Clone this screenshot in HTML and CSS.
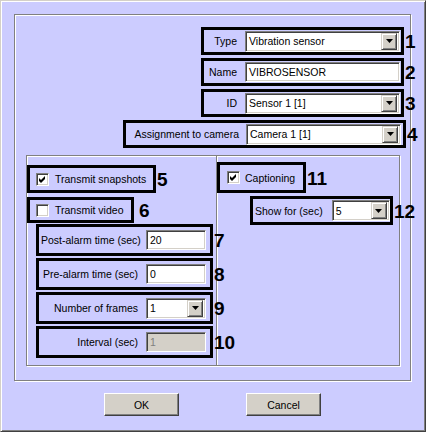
FILE: index.html
```html
<!DOCTYPE html>
<html lang="en">
<head>
    <meta charset="UTF-8">
    <title>Sensor settings</title>
    <link rel="stylesheet" href="styles.css">
</head>
<body>
    <div class="dialog">
        <div class="frame main">
            <div class="field top">
                <span class="label">Type</span>
                <div class="combo w155"><span class="value">Vibration sensor</span><span class="drop"><svg width="7" height="4"><polygon points="0,0 7,0 3.5,4" fill="#000"/></svg></span></div>
                <span class="num">1</span>
            </div>
            <div class="field top">
                <span class="label">Name</span>
                <div class="edit w155">VIBROSENSOR</div>
                <span class="num">2</span>
            </div>
            <div class="field top">
                <span class="label">ID</span>
                <div class="combo w155"><span class="value">Sensor 1 [1]</span><span class="drop"><svg width="7" height="4"><polygon points="0,0 7,0 3.5,4" fill="#000"/></svg></span></div>
                <span class="num">3</span>
            </div>
            <div class="field top wide">
                <span class="label">Assignment to camera</span>
                <div class="combo w155"><span class="value">Camera 1 [1]</span><span class="drop"><svg width="7" height="4"><polygon points="0,0 7,0 3.5,4" fill="#000"/></svg></span></div>
                <span class="num">4</span>
            </div>

            <div class="frame options">
                <div class="col col-left">
                    <div class="field check snapshots">
                        <span class="box"><svg width="7" height="7"><polygon points="0,2 2,4 6,0 6,3 2,7 0,5" fill="#000"/></svg></span>
                        <span>Transmit snapshots</span>
                        <span class="num">5</span>
                    </div>
                    <div class="field check video">
                        <span class="box"></span>
                        <span>Transmit video</span>
                        <span class="num far">6</span>
                    </div>
                    <div class="field timed">
                        <span class="label">Post-alarm time (sec)</span>
                        <div class="edit w60">20</div>
                        <span class="num">7</span>
                    </div>
                    <div class="field timed">
                        <span class="label">Pre-alarm time (sec)</span>
                        <div class="edit w60">0</div>
                        <span class="num">8</span>
                    </div>
                    <div class="field timed">
                        <span class="label">Number of frames</span>
                        <div class="combo w60"><span class="value">1</span><span class="drop"><svg width="7" height="4"><polygon points="0,0 7,0 3.5,4" fill="#000"/></svg></span></div>
                        <span class="num">9</span>
                    </div>
                    <div class="field timed">
                        <span class="label">Interval (sec)</span>
                        <div class="edit w60 disabled">1</div>
                        <span class="num">10</span>
                    </div>
                </div>
                <div class="col col-right">
                    <div class="field check captioning">
                        <span class="box"><svg width="7" height="7"><polygon points="0,2 2,4 6,0 6,3 2,7 0,5" fill="#000"/></svg></span>
                        <span>Captioning</span>
                        <span class="num">11</span>
                    </div>
                    <div class="field showfor">
                        <span class="label">Show for (sec)</span>
                        <div class="combo w58"><span class="value">5</span><span class="drop"><svg width="7" height="4"><polygon points="0,0 7,0 3.5,4" fill="#000"/></svg></span></div>
                        <span class="num">12</span>
                    </div>
                </div>
            </div>
        </div>

        <div class="actions">
            <button class="button">OK</button>
            <button class="button">Cancel</button>
        </div>
    </div>
</body>
</html>
```

FILE: styles.css
```css
* {
    box-sizing: border-box;
}
body {
    margin: 0;
    font-family: 'Liberation Sans', Arial, sans-serif;
    font-size: 10.5px;
    color: #000;
}
.dialog {
    width: 426px;
    height: 432px;
    background-color: #ccccff;
    border: 1px solid;
    border-color: #d4d0c8 #404040 #404040 #d4d0c8;
    box-shadow: inset 1px 1px #fff, inset -1px -1px #808080;
    padding: 13px 13px 0;
}
/* etched group frame */
.frame {
    border: 1px solid #808080;
    box-shadow: inset 1px 1px #fff, 1px 1px #fff;
}
.main {
    width: 397px;
    height: 367px;
    padding: 12px 6px 0 0;
    display: flex;
    flex-direction: column;
    align-items: flex-end;
}
.field {
    position: relative;
    display: flex;
    align-items: center;
    border: 3px solid #000;
    flex-shrink: 0;
}
.num {
    position: absolute;
    left: calc(100% + 4px);
    top: 50%;
    transform: translateY(-50%);
    font-size: 19px;
    font-weight: bold;
    line-height: 1;
    white-space: nowrap;
}
.num.far {
    left: calc(100% + 8px);
}
.label {
    white-space: nowrap;
}
.top {
    width: 203px;
    height: 28px;
    padding-right: 1px;
    gap: 8px;
}
.top + .top {
    margin-top: 3px;
}
.top .label {
    flex: 1;
    text-align: right;
}
.top.wide {
    width: 283px;
    margin-right: -2px;
    padding-right: 2px;
    gap: 7px;
}

/* controls */
.combo, .edit, .box {
    background-color: #fff;
    border: 1px solid;
    border-color: #808080 #fff #fff #808080;
    box-shadow: inset 1px 1px #404040, inset -1px -1px #d4d0c8;
}
.combo {
    display: flex;
    align-items: center;
    height: 21px;
    padding: 2px 2px 2px 3px;
}
.combo .value {
    flex: 1;
}
.drop {
    width: 16px;
    height: 17px;
    background-color: #d4d0c8;
    border: 1px solid;
    border-color: #d4d0c8 #404040 #404040 #d4d0c8;
    box-shadow: inset 1px 1px #fff, inset -1px -1px #808080;
    display: flex;
    align-items: center;
    justify-content: center;
}
.drop svg {
    display: block;
}
.edit {
    display: flex;
    align-items: center;
    height: 20px;
    padding: 0 3px;
}
.edit.disabled {
    background-color: #d4d0c8;
    color: #808080;
}
.w155 { width: 155px; }
.w60 { width: 60px; }
.w58 { width: 58px; }
.box {
    width: 13px;
    height: 13px;
    display: flex;
    align-items: center;
    justify-content: center;
    flex-shrink: 0;
}
.box svg {
    display: block;
}

/* inner group with two columns */
.options {
    align-self: stretch;
    margin: 7px 4px 0 11px;
    height: 211px;
    display: flex;
}
.col {
    display: flex;
    flex-direction: column;
    align-items: flex-start;
}
.col-left {
    width: 190px;
    border-right: 1px solid #808080;
    padding-top: 9px;
}
.col-right {
    flex: 1;
    box-shadow: inset 1px 0 #fff;
    padding-top: 6px;
}
.check {
    padding-left: 6px;
    gap: 6px;
}
.snapshots {
    width: 129px;
    height: 28px;
}
.video {
    width: 107px;
    height: 26px;
    margin-top: 4px;
}
.timed {
    width: 177px;
    height: 32px;
    margin: 2px 0 0 9px;
    padding: 0 4px 0 2px;
    gap: 8px;
}
.video + .timed {
    margin-top: 1px;
}
.timed .label {
    width: 97px;
    text-align: right;
}
.captioning {
    width: 89px;
    height: 31px;
    padding-left: 7px;
    gap: 5px;
}
.showfor {
    width: 143px;
    height: 29px;
    margin: 3px 0 0 33px;
    padding-left: 2px;
    gap: 9px;
}

.actions {
    display: flex;
    gap: 67px;
    padding-left: 90px;
    margin-top: 12px;
}
.button {
    width: 75px;
    height: 23px;
    padding: 0;
    font: inherit;
    color: #000;
    background-color: #d4d0c8;
    border: 1px solid;
    border-color: #fff #404040 #404040 #fff;
    box-shadow: inset -1px -1px #808080;
}
```
